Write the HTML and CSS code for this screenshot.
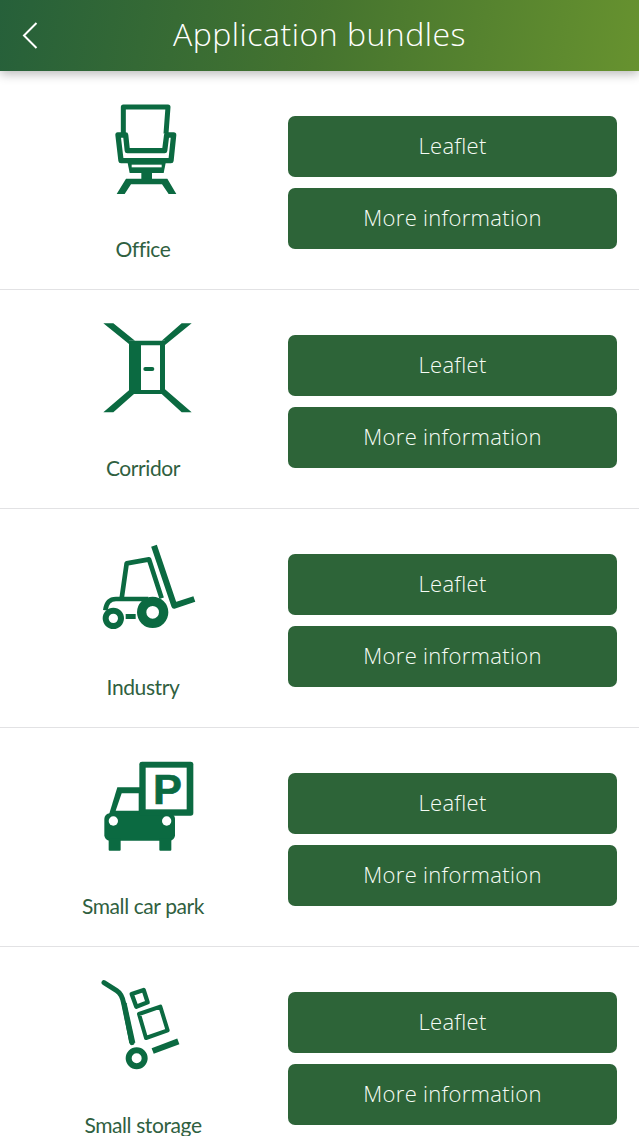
FILE: index.html
```html
<!DOCTYPE html>
<html lang="en">
<head>
<meta charset="utf-8">
<title>Application bundles</title>
<link rel="stylesheet" href="styles.css">
</head>
<body>
<div class="page">
  <header class="topbar">
    <svg class="back" viewBox="0 0 16 27" width="16" height="27"><path d="M14.5 1 L2 13.5 L14.5 26" /></svg>
    <h1 class="title">Application bundles</h1>
  </header>
  <main>
    <section class="row">
      <div class="item">
        <svg class="icon" viewBox="-36 -12 390 330" width="130" height="110">
          <path class="ln" stroke-width="15" d="M100 116 V36 H234 L228 116"/>
          <path class="box" stroke-width="16" d="M84 120 H107 L112 167 H224 L230 120 H251 L243 197 H93 Z"/>
          <path class="fill" d="M113 204 H227 L221 234 H119 Z"/>
          <rect class="hole" x="125" y="209" width="90" height="8"/>
          <rect class="fill" x="154" y="228" width="32" height="26"/>
          <path class="fill" d="M80 297 L108 251 H232 L259 297 H236 L216 268 H123 L104 297 Z"/>
        </svg>
        <p class="label">Office</p>
      </div>
      <div class="actions"><a class="btn">Leaflet</a><a class="btn">More information</a></div>
    </section>
    <section class="row">
      <div class="item">
        <svg class="icon" viewBox="-6 0 390 330" width="130" height="110">
          <path class="fill" d="M70 40 H100 L165 92 H147 V102 Z M305 40 H335 L255 105 V92 H245 Z M147 241 L162 252 L100 307 H70 Z M245 252 L255 238 L335 307 H305 Z"/>
          <path class="fill" fill-rule="evenodd" d="M147 92 H255 V252 H147 Z M183 106 V240 H240 V106 Z"/>
          <rect class="fill" x="190" y="171" width="33" height="12" rx="6"/>
        </svg>
        <p class="label">Corridor</p>
      </div>
      <div class="actions"><a class="btn">Leaflet</a><a class="btn">More information</a></div>
    </section>
    <section class="row">
      <div class="item">
        <svg class="icon" viewBox="-6 -18 390 330" width="130" height="110">
          <path class="ln" stroke-width="18" d="M222 32 L283 212 L343 192"/>
          <path class="ln" stroke-width="14" d="M125 190 L140 85 L207 73 L245 190"/>
          <path class="ln" stroke-width="14" d="M76 226 Q80 192 108 192 H205"/>
          <circle class="ln" stroke-width="18" cx="100" cy="250" r="23"/>
          <circle class="ln" stroke-width="28" cx="218" cy="232" r="33"/>
          <rect class="fill" x="137" y="237" width="30" height="15"/>
        </svg>
        <p class="label">Industry</p>
      </div>
      <div class="actions"><a class="btn">Leaflet</a><a class="btn">More information</a></div>
    </section>
    <section class="row">
      <div class="item">
        <svg class="icon" viewBox="-6 -6 390 330" width="130" height="110">
          <path class="fill" d="M112 112 H185 V200 H85 Z"/>
          <rect class="fill" x="73" y="190" width="212" height="82" rx="16"/>
          <rect class="fill" x="86" y="265" width="36" height="37" rx="3"/>
          <rect class="fill" x="238" y="265" width="36" height="37" rx="3"/>
          <path class="hole" d="M125 130 H176 V182 H107 Z"/>
          <circle class="hole" cx="100" cy="213" r="14"/>
          <circle class="hole" cx="260" cy="213" r="14"/>
          <rect class="fill" x="178" y="35" width="162" height="162" rx="8"/>
          <rect class="hole" x="197" y="53" width="123" height="125"/>
          <text class="sign" x="219" y="163">P</text>
        </svg>
        <p class="label">Small car park</p>
      </div>
      <div class="actions"><a class="btn">Leaflet</a><a class="btn">More information</a></div>
    </section>
    <section class="row">
      <div class="item">
        <svg class="icon" viewBox="-6 -9 390 330" width="130" height="110">
          <path class="ln round" stroke-width="15" d="M72 38 L110 62 Q126 72 131 100 L156 218"/>
          <path class="fill" d="M120 75 L140 100 L166 218 L148 220 Z"/>
          <path class="ln" stroke-width="13" d="M155 72 L191 60 L203 97 L169 110 Z"/>
          <path class="ln" stroke-width="12" d="M177 132 L241 110 L263 181 L198 204 Z"/>
          <path class="ln" stroke-width="18" d="M218 243 L295 214"/>
          <circle class="ln" stroke-width="18" cx="170" cy="265" r="24"/>
        </svg>
        <p class="label">Small storage</p>
      </div>
      <div class="actions"><a class="btn">Leaflet</a><a class="btn">More information</a></div>
    </section>
  </main>
</div>
</body>
</html>
```

FILE: styles.css
```css
html, body {
  margin: 0;
  padding: 0;
  background: #fff;
}
.page {
  height: 100vh;
  overflow: hidden;
  font-family: "Lato", "Liberation Sans", sans-serif;
}
.topbar {
  position: relative;
  z-index: 1;
  height: 71px;
  display: flex;
  align-items: center;
  justify-content: center;
  background: linear-gradient(100deg, #26603a 0%, #45742f 50%, #67922f 100%);
  box-shadow: 0 3px 10px rgba(0, 0, 0, 0.28);
}
.back {
  position: absolute;
  left: 22px;
  top: 22px;
  fill: none;
  stroke: #fff;
  stroke-width: 2;
}
.title {
  margin: 0 0 3px;
  font-family: "Open Sans", "Liberation Sans", sans-serif;
  font-size: 32px;
  font-weight: 300;
  color: #fff;
  letter-spacing: 0.5px;
  line-height: 1;
}
.row {
  box-sizing: border-box;
  height: 219px;
  display: grid;
  grid-template-columns: 286px 329px;
  column-gap: 2px;
  border-bottom: 1px solid #e2e2e4;
}
.item {
  display: flex;
  flex-direction: column;
  align-items: center;
  padding-top: 20px;
}
.icon {
  display: block;
}
.ln {
  fill: none;
  stroke: #0b6a41;
  stroke-linejoin: round;
}
.round {
  stroke-linecap: round;
}
.box {
  fill: #fff;
  stroke: #0b6a41;
  stroke-linejoin: round;
}
.fill {
  fill: #0b6a41;
}
.hole {
  fill: #fff;
}
.sign {
  fill: #0b6a41;
  stroke: #0b6a41;
  stroke-width: 2px;
  font-family: "Liberation Sans", sans-serif;
  font-weight: 700;
  font-size: 130px;
}
.label {
  margin: 36px 0 0;
  font-size: 21px;
  line-height: 23px;
  letter-spacing: -0.4px;
  color: #2f6040;
  white-space: nowrap;
}
.actions {
  display: flex;
  flex-direction: column;
  gap: 11px;
  padding-top: 45px;
}
.btn {
  height: 61px;
  box-sizing: border-box;
  padding-bottom: 4px;
  display: flex;
  align-items: center;
  justify-content: center;
  border-radius: 7px;
  background: #2d6438;
  color: #f6fcf5;
  font-family: "Open Sans", "Liberation Sans", sans-serif;
  font-size: 22px;
  font-weight: 300;
  letter-spacing: 0.3px;
}
```
